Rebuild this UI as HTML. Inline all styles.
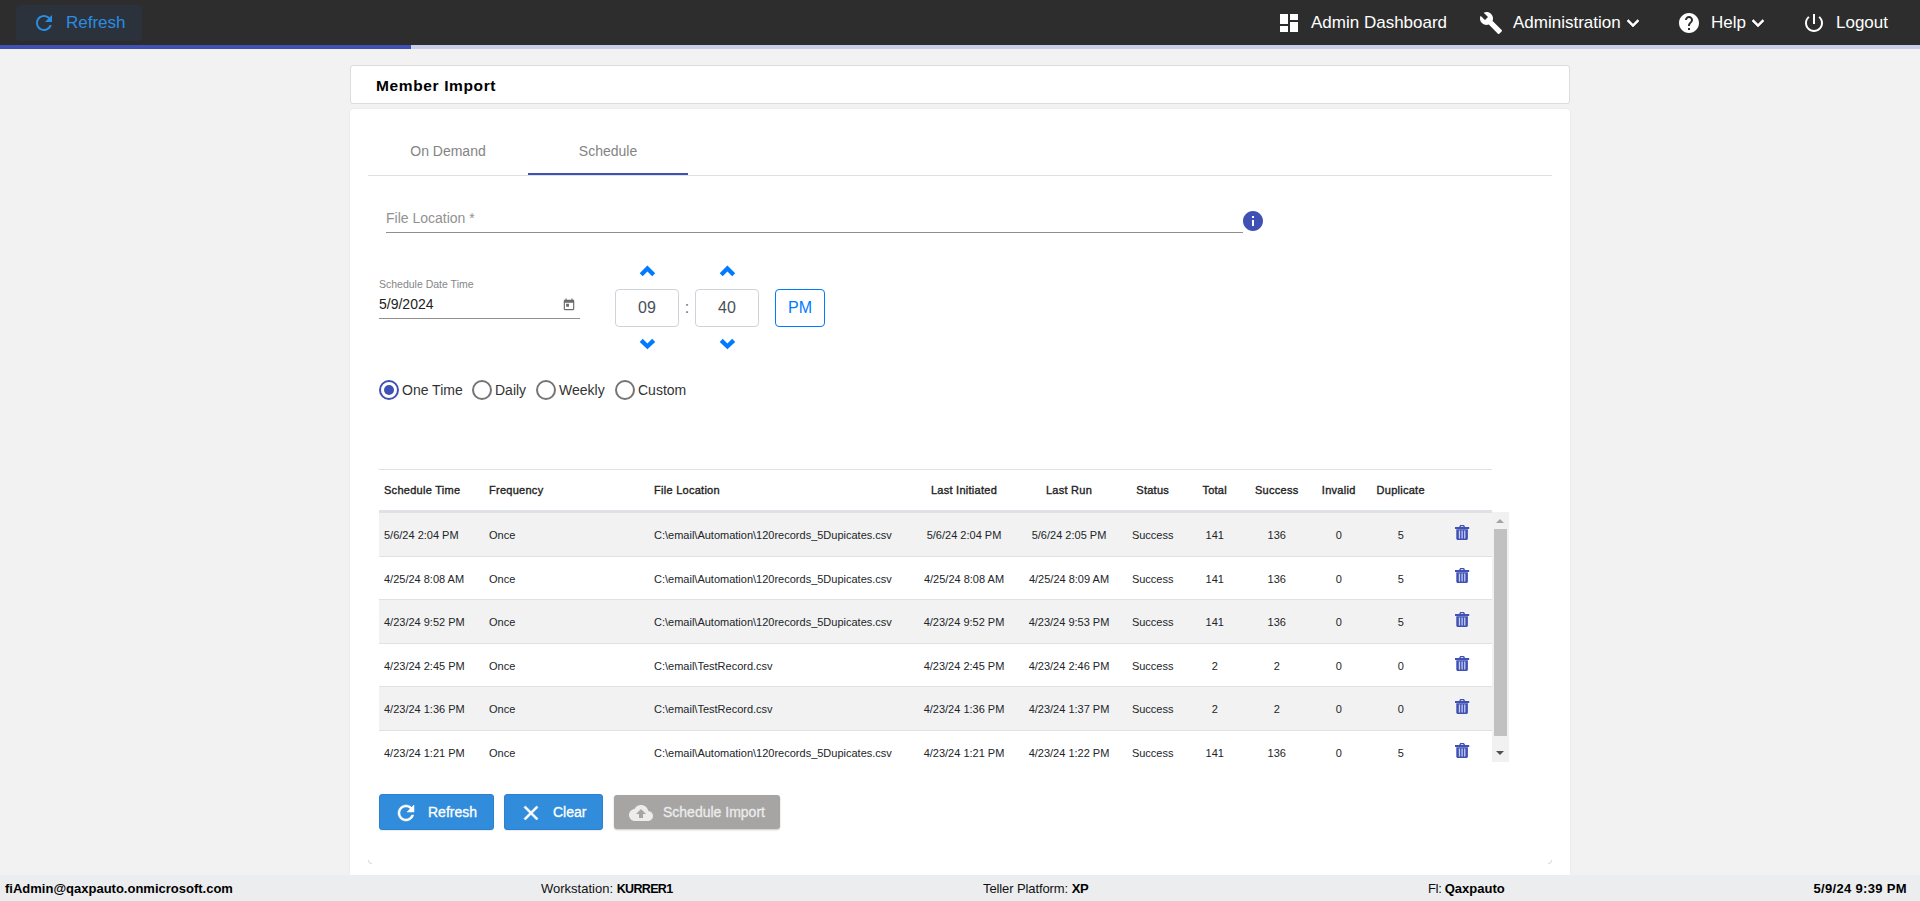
<!DOCTYPE html>
<html lang="en">
<head>
<meta charset="utf-8">
<title>Member Import</title>
<style>
*{box-sizing:border-box;margin:0;padding:0}
html,body{width:1920px;height:901px;overflow:hidden}
body{background:#f2f2f2;font-family:"Liberation Sans",Arial,sans-serif;color:#212529;position:relative}
.abs{position:absolute}
svg{display:block}
/* top bar */
#topbar{position:absolute;left:0;top:0;width:1920px;height:45px;background:#2d2d2d}
#progress{position:absolute;left:0;top:45px;width:1920px;height:4px;background:#c9cdea}
#progress i{position:absolute;left:0;top:0;height:4px;width:410.600px;background:#3f51b5}
#tb-refresh{position:absolute;left:16px;top:5px;width:126px;height:36px;border-radius:4px;background:#2b323c;color:#2b8de0;font-size:17px}
#tb-refresh svg{position:absolute;left:16px;top:6px}
#tb-refresh span{position:absolute;left:50px;top:8px;line-height:20px}
.nav{position:absolute;top:0;height:45px;color:#fff;font-size:17px;line-height:20px;white-space:nowrap}
.nav span{position:absolute;top:13px}
.nav svg{position:absolute}
/* cards */
#card1{position:absolute;left:350px;top:65px;width:1220px;height:39px;background:#fff;border:1px solid #dcdcdc;border-radius:3px}
#card1 h1{position:absolute;left:25px;top:10px;font-size:15.500px;line-height:20px;font-weight:bold;color:#000;white-space:nowrap;letter-spacing:.63px}
#card2{position:absolute;left:350px;top:109px;width:1220px;height:766px;background:#fff;border-radius:4px 4px 0 0;box-shadow:0 0 2px rgba(0,0,0,.08)}
/* tabs */
#tabs{position:absolute;left:368px;top:127px;width:1184px;height:49px;border-bottom:1px solid #e0e0e0}
.tab{position:absolute;top:0;width:160px;height:48px;line-height:48px;text-align:center;font-size:14px;color:#848484}
#ink{position:absolute;left:528px;top:173px;width:160px;height:2px;background:#3f51b5}
/* form */
#fileloc{position:absolute;left:386px;top:209px;font-size:14px;line-height:18px;color:#919191;white-space:nowrap}
#fileline{position:absolute;left:386px;top:232px;width:857px;height:1px;background:#8f8f8f}
#info{position:absolute;left:1241px;top:209px}
#sdt-label{position:absolute;left:379px;top:278px;font-size:10.5px;line-height:12px;color:#868686;white-space:nowrap}
#sdt-val{position:absolute;left:379px;top:296px;font-size:14px;line-height:16px;color:#222;white-space:nowrap}
#sdt-line{position:absolute;left:379px;top:318px;width:201px;height:1px;background:#8f8f8f}
#cal{position:absolute;left:562px;top:298px}
.tbox{position:absolute;top:289px;width:64px;height:38px;border:1px solid #ced4da;border-radius:4px;background:#fff;color:#495057;font-size:16px;line-height:36px;text-align:center}
#colon{position:absolute;left:683px;top:299px;width:8px;text-align:center;font-size:16px;line-height:18px;color:#6c757d}
#pm{position:absolute;left:775px;top:289px;width:50px;height:38px;border:1px solid #007bff;border-radius:4px;color:#007bff;font-size:16px;line-height:36px;text-align:center;background:#fff}
.chev{position:absolute}
/* radios */
.radio{position:absolute;top:380px;width:20px;height:20px;border:2px solid #757575;border-radius:50%}
.radio.on{border-color:#3f51b5}
.radio.on::after{content:"";position:absolute;left:3px;top:3px;width:10px;height:10px;border-radius:50%;background:#3f51b5}
.rlabel{position:absolute;top:381px;font-size:14px;line-height:18px;color:#333;white-space:nowrap}
/* table */
#thead{position:absolute;left:379px;top:469px;width:1113px;height:43px;border-top:1px solid #dee2e6;border-bottom:2px solid #dee2e6;font-size:11px;font-weight:normal;-webkit-text-stroke:.35px #222;color:#222}
#tbody{position:absolute;left:379px;top:512px;width:1130px;height:250px;overflow:hidden}
.row{position:absolute;left:0;width:1113px;height:43.6px;border-top:1px solid #dee2e6;font-size:11px;color:#212529}
.row.odd{background:#f2f2f2}
.c{position:absolute;top:0;white-space:nowrap}
#thead .c{top:13px;line-height:14px;letter-spacing:.27px}
.row .c{top:15px;line-height:14px}
.cc{text-align:center;transform:translateX(-50%)}
.trash{position:absolute;left:1075.850px;top:11.900px}
#scroll{position:absolute;left:1113px;top:0;width:17px;height:250px;background:#f1f1f1}
#scroll .thumb{position:absolute;left:2px;top:17px;width:13px;height:207px;background:#c1c1c1}
#scroll .up{position:absolute;left:4px;top:6.500px;width:0;height:0;border-left:4px solid transparent;border-right:4px solid transparent;border-bottom:4.500px solid #a3a3a3}
#scroll .dn{position:absolute;left:4px;top:238.500px;width:0;height:0;border-left:4px solid transparent;border-right:4px solid transparent;border-top:4.500px solid #505050}
/* buttons */
.btn{position:absolute;top:794px;height:36px;border-radius:3px;background:#318ddb;border:1px solid #2b80cf;color:#fff;font-size:14px;line-height:36px;white-space:nowrap;box-shadow:0 1px 1px rgba(0,0,0,.08);-webkit-text-stroke:.3px #fff}
.btn svg{position:absolute;left:13.500px;top:5.500px}
.btn span{position:absolute;left:48px;top:-1px}
.btn.dis{top:795px;height:34px;line-height:34px;background:#a6a5a4;border:none;color:#ececec;box-shadow:0 1px 2px rgba(0,0,0,.22);-webkit-text-stroke:.3px #ececec}
.btn.dis svg{left:15px;top:5.500px}
.btn.dis span{left:49px;top:0}
/* footer */
#footer{position:absolute;left:0;top:875px;width:1920px;height:26px;background:#ecedef;font-size:13px;line-height:16px;color:#111}
#footer div{position:absolute;top:6px;white-space:nowrap}
#footer b{font-weight:bold;color:#000}
</style>
</head>
<body>
<div id="topbar">
  <div id="tb-refresh">
    <svg width="24" height="24" viewBox="0 0 24 24"><path fill="#2b8de0" d="M17.65 6.35C16.2 4.9 14.21 4 12 4c-4.42 0-7.99 3.58-7.99 8s3.57 8 7.99 8c3.73 0 6.84-2.55 7.73-6h-2.08c-.82 2.33-3.04 4-5.65 4-3.31 0-6-2.69-6-6s2.69-6 6-6c1.66 0 3.14.69 4.22 1.78L13 11h7V4l-2.35 2.35z"/></svg>
    <span>Refresh</span>
  </div>
  <div class="nav" style="left:1277px;width:180px">
    <svg style="left:0;top:11px" width="24" height="24" viewBox="0 0 24 24"><path fill="#fff" d="M3 13h8V3H3v10zm0 8h8v-6H3v6zm10 0h8V11h-8v10zm0-18v6h8V3h-8z"/></svg>
    <span style="left:34px">Admin Dashboard</span>
  </div>
  <div class="nav" style="left:1479px;width:170px">
    <svg style="left:0;top:11px" width="24" height="24" viewBox="0 0 24 24"><path fill="#fff" d="M22.7 19l-9.1-9.1c.9-2.3.4-5-1.500-6.900-2-2-5-2.400-7.400-1.300L9 6 6 9 1.600 4.700C.4 7.100.9 10.100 2.900 12.100c1.900 1.900 4.600 2.400 6.900 1.500l9.100 9.100c.4.400 1 .4 1.400 0l2.300-2.300c.5-.4.500-1.100.1-1.400z"/></svg>
    <span style="left:34px">Administration</span>
    <svg style="left:142px;top:11px" width="24" height="24" viewBox="0 0 24 24"><path fill="#fff" stroke="#fff" stroke-width=".6" d="M16.59 8.590L12 13.170 7.410 8.590 6 10l6 6 6-6z"/></svg>
  </div>
  <div class="nav" style="left:1677px;width:100px">
    <svg style="left:0;top:11px" width="24" height="24" viewBox="0 0 24 24"><path fill="#fff" d="M12 2C6.480 2 2 6.480 2 12s4.480 10 10 10 10-4.480 10-10S17.520 2 12 2zm1 17h-2v-2h2v2zm2.070-7.750l-.9.920C13.450 12.900 13 13.500 13 15h-2v-.5c0-1.100.45-2.100 1.170-2.830l1.240-1.260c.37-.36.590-.86.590-1.410 0-1.100-.9-2-2-2s-2 .9-2 2H8c0-2.210 1.790-4 4-4s4 1.790 4 4c0 .88-.36 1.680-.93 2.250z"/></svg>
    <span style="left:34px">Help</span>
    <svg style="left:69px;top:11px" width="24" height="24" viewBox="0 0 24 24"><path fill="#fff" stroke="#fff" stroke-width=".6" d="M16.59 8.590L12 13.170 7.410 8.590 6 10l6 6 6-6z"/></svg>
  </div>
  <div class="nav" style="left:1802px;width:100px">
    <svg style="left:0;top:11px" width="24" height="24" viewBox="0 0 24 24"><path fill="#fff" d="M13 3h-2v10h2V3zm4.830 2.170l-1.420 1.420C17.990 7.860 19 9.810 19 12c0 3.870-3.130 7-7 7s-7-3.130-7-7c0-2.190 1.010-4.140 2.580-5.420L6.170 5.170C4.230 6.820 3 9.260 3 12c0 4.970 4.030 9 9 9s9-4.030 9-9c0-2.740-1.230-5.180-3.170-6.830z"/></svg>
    <span style="left:34px">Logout</span>
  </div>
</div>
<div id="progress"><i></i></div>

<div id="card1"><h1>Member Import</h1></div>
<div id="card2"></div>

<div id="tabs">
  <div class="tab" style="left:0">On Demand</div>
  <div class="tab" style="left:160px">Schedule</div>
</div>
<div id="ink"></div>

<div id="fileloc">File Location *</div>
<div id="fileline"></div>
<svg id="info" width="24" height="24" viewBox="0 0 24 24"><path fill="#3f51b5" d="M12 2C6.480 2 2 6.480 2 12s4.480 10 10 10 10-4.480 10-10S17.520 2 12 2zm1 15h-2v-6h2v6zm0-8h-2V7h2v2z"/></svg>

<div id="sdt-label">Schedule Date Time</div>
<div id="sdt-val">5/9/2024</div>
<div id="sdt-line"></div>
<svg id="cal" width="14" height="14" viewBox="0 0 24 24"><path fill="#6b6b6b" d="M19 3h-1V1h-2v2H8V1H6v2H5c-1.110 0-1.990.9-1.990 2L3 19c0 1.100.89 2 2 2h14c1.100 0 2-.9 2-2V5c0-1.100-.9-2-2-2zm0 16H5V8h14v11zM7 10h5v5H7z"/></svg>

<svg class="chev" style="left:639px;top:265px" width="17" height="12" viewBox="0 0 17 12"><polygon fill="#007bff" points="8.400,0.500 0.700,8.300 3.700,11.300 8.400,6.600 13.200,11.300 16.200,8.300"/></svg>
<svg class="chev" style="left:719px;top:265px" width="17" height="12" viewBox="0 0 17 12"><polygon fill="#007bff" points="8.400,0.500 0.700,8.300 3.700,11.300 8.400,6.600 13.200,11.300 16.200,8.300"/></svg>
<div class="tbox" style="left:615px">09</div>
<div id="colon">:</div>
<div class="tbox" style="left:695px">40</div>
<div id="pm">PM</div>
<svg class="chev" style="left:639px;top:338px" width="17" height="12" viewBox="0 0 17 12"><polygon fill="#007bff" points="3.700,0.800 0.700,3.900 8.400,11.300 16.200,3.900 13.200,0.800 8.400,5.500"/></svg>
<svg class="chev" style="left:719px;top:338px" width="17" height="12" viewBox="0 0 17 12"><polygon fill="#007bff" points="3.700,0.800 0.700,3.900 8.400,11.300 16.200,3.900 13.200,0.800 8.400,5.500"/></svg>

<div class="radio on" style="left:379px"></div><div class="rlabel" style="left:402px">One Time</div>
<div class="radio" style="left:472px"></div><div class="rlabel" style="left:495px">Daily</div>
<div class="radio" style="left:536px"></div><div class="rlabel" style="left:559px">Weekly</div>
<div class="radio" style="left:615px"></div><div class="rlabel" style="left:638px">Custom</div>

<div id="thead">
  <div class="c" style="left:5px">Schedule Time</div>
  <div class="c" style="left:110px">Frequency</div>
  <div class="c" style="left:275px">File Location</div>
  <div class="c cc" style="left:585px">Last Initiated</div>
  <div class="c cc" style="left:690px">Last Run</div>
  <div class="c cc" style="left:773.7px">Status</div>
  <div class="c cc" style="left:835.7px">Total</div>
  <div class="c cc" style="left:897.7px">Success</div>
  <div class="c cc" style="left:959.7px">Invalid</div>
  <div class="c cc" style="left:1021.7px">Duplicate</div>
</div>
<div id="tbody">
  <div class="row odd" style="top:0.0px">
  <div class="c" style="left:5px">5/6/24 2:04 PM</div><div class="c" style="left:110px">Once</div><div class="c" style="left:275px">C:\email\Automation\120records_5Dupicates.csv</div>
  <div class="c cc" style="left:585px">5/6/24 2:04 PM</div><div class="c cc" style="left:690px">5/6/24 2:05 PM</div><div class="c cc" style="left:773.7px">Success</div><div class="c cc" style="left:835.7px">141</div><div class="c cc" style="left:897.7px">136</div><div class="c cc" style="left:959.7px">0</div><div class="c cc" style="left:1021.7px">5</div>
  <svg class="trash" width="15" height="16" viewBox="0 0 15 16"><path fill="#3f51b5" fill-rule="evenodd" d="M0 1.900h4.100L4.900.400C5 .150 5.250 0 5.500 0h3.200c.25 0 .5.150.6.400l.8 1.500h4.100v2H0zM5.700 1.900h2.800l-.3-.65H6zM1.300 4.300h11.600v9.300c0 .85-.65 1.500-1.500 1.500H2.800c-.85 0-1.500-.65-1.500-1.500z"/><path fill="#c5caea" d="M3.800 5.400h1.300v8.100h-1.300zM6.450 5.400h1.300v8.100H6.450zM9.100 5.400h1.300v8.100h-1.300z"/></svg>
  </div>
  <div class="row" style="top:43.6px">
  <div class="c" style="left:5px">4/25/24 8:08 AM</div><div class="c" style="left:110px">Once</div><div class="c" style="left:275px">C:\email\Automation\120records_5Dupicates.csv</div>
  <div class="c cc" style="left:585px">4/25/24 8:08 AM</div><div class="c cc" style="left:690px">4/25/24 8:09 AM</div><div class="c cc" style="left:773.7px">Success</div><div class="c cc" style="left:835.7px">141</div><div class="c cc" style="left:897.7px">136</div><div class="c cc" style="left:959.7px">0</div><div class="c cc" style="left:1021.7px">5</div>
  <svg class="trash" width="15" height="16" viewBox="0 0 15 16"><path fill="#3f51b5" fill-rule="evenodd" d="M0 1.900h4.100L4.900.400C5 .150 5.250 0 5.500 0h3.200c.25 0 .5.150.6.400l.8 1.500h4.100v2H0zM5.700 1.900h2.800l-.3-.65H6zM1.300 4.300h11.600v9.300c0 .85-.65 1.500-1.500 1.500H2.800c-.85 0-1.500-.65-1.500-1.500z"/><path fill="#c5caea" d="M3.800 5.400h1.300v8.100h-1.300zM6.450 5.400h1.300v8.100H6.450zM9.100 5.400h1.300v8.100h-1.300z"/></svg>
  </div>
  <div class="row odd" style="top:87.2px">
  <div class="c" style="left:5px">4/23/24 9:52 PM</div><div class="c" style="left:110px">Once</div><div class="c" style="left:275px">C:\email\Automation\120records_5Dupicates.csv</div>
  <div class="c cc" style="left:585px">4/23/24 9:52 PM</div><div class="c cc" style="left:690px">4/23/24 9:53 PM</div><div class="c cc" style="left:773.7px">Success</div><div class="c cc" style="left:835.7px">141</div><div class="c cc" style="left:897.7px">136</div><div class="c cc" style="left:959.7px">0</div><div class="c cc" style="left:1021.7px">5</div>
  <svg class="trash" width="15" height="16" viewBox="0 0 15 16"><path fill="#3f51b5" fill-rule="evenodd" d="M0 1.900h4.100L4.900.400C5 .150 5.250 0 5.500 0h3.200c.25 0 .5.150.6.400l.8 1.500h4.100v2H0zM5.700 1.900h2.800l-.3-.65H6zM1.300 4.300h11.600v9.300c0 .85-.65 1.500-1.500 1.500H2.800c-.85 0-1.500-.65-1.500-1.500z"/><path fill="#c5caea" d="M3.800 5.400h1.300v8.100h-1.300zM6.450 5.400h1.300v8.100H6.450zM9.100 5.400h1.300v8.100h-1.300z"/></svg>
  </div>
  <div class="row" style="top:130.8px">
  <div class="c" style="left:5px">4/23/24 2:45 PM</div><div class="c" style="left:110px">Once</div><div class="c" style="left:275px">C:\email\TestRecord.csv</div>
  <div class="c cc" style="left:585px">4/23/24 2:45 PM</div><div class="c cc" style="left:690px">4/23/24 2:46 PM</div><div class="c cc" style="left:773.7px">Success</div><div class="c cc" style="left:835.7px">2</div><div class="c cc" style="left:897.7px">2</div><div class="c cc" style="left:959.7px">0</div><div class="c cc" style="left:1021.7px">0</div>
  <svg class="trash" width="15" height="16" viewBox="0 0 15 16"><path fill="#3f51b5" fill-rule="evenodd" d="M0 1.900h4.100L4.900.400C5 .150 5.250 0 5.500 0h3.200c.25 0 .5.150.6.400l.8 1.500h4.100v2H0zM5.700 1.900h2.800l-.3-.65H6zM1.300 4.300h11.600v9.300c0 .85-.65 1.500-1.500 1.500H2.800c-.85 0-1.500-.65-1.500-1.500z"/><path fill="#c5caea" d="M3.800 5.400h1.300v8.100h-1.300zM6.450 5.400h1.300v8.100H6.450zM9.100 5.400h1.300v8.100h-1.300z"/></svg>
  </div>
  <div class="row odd" style="top:174.4px">
  <div class="c" style="left:5px">4/23/24 1:36 PM</div><div class="c" style="left:110px">Once</div><div class="c" style="left:275px">C:\email\TestRecord.csv</div>
  <div class="c cc" style="left:585px">4/23/24 1:36 PM</div><div class="c cc" style="left:690px">4/23/24 1:37 PM</div><div class="c cc" style="left:773.7px">Success</div><div class="c cc" style="left:835.7px">2</div><div class="c cc" style="left:897.7px">2</div><div class="c cc" style="left:959.7px">0</div><div class="c cc" style="left:1021.7px">0</div>
  <svg class="trash" width="15" height="16" viewBox="0 0 15 16"><path fill="#3f51b5" fill-rule="evenodd" d="M0 1.900h4.100L4.900.400C5 .150 5.250 0 5.500 0h3.200c.25 0 .5.150.6.400l.8 1.500h4.100v2H0zM5.700 1.900h2.800l-.3-.65H6zM1.300 4.300h11.600v9.300c0 .85-.65 1.500-1.500 1.500H2.800c-.85 0-1.500-.65-1.500-1.500z"/><path fill="#c5caea" d="M3.800 5.400h1.300v8.100h-1.300zM6.450 5.400h1.300v8.100H6.450zM9.100 5.400h1.300v8.100h-1.300z"/></svg>
  </div>
  <div class="row" style="top:218.0px">
  <div class="c" style="left:5px">4/23/24 1:21 PM</div><div class="c" style="left:110px">Once</div><div class="c" style="left:275px">C:\email\Automation\120records_5Dupicates.csv</div>
  <div class="c cc" style="left:585px">4/23/24 1:21 PM</div><div class="c cc" style="left:690px">4/23/24 1:22 PM</div><div class="c cc" style="left:773.7px">Success</div><div class="c cc" style="left:835.7px">141</div><div class="c cc" style="left:897.7px">136</div><div class="c cc" style="left:959.7px">0</div><div class="c cc" style="left:1021.7px">5</div>
  <svg class="trash" width="15" height="16" viewBox="0 0 15 16"><path fill="#3f51b5" fill-rule="evenodd" d="M0 1.900h4.100L4.900.400C5 .150 5.250 0 5.500 0h3.200c.25 0 .5.150.6.400l.8 1.500h4.100v2H0zM5.700 1.900h2.800l-.3-.65H6zM1.300 4.300h11.600v9.300c0 .85-.65 1.500-1.500 1.500H2.800c-.85 0-1.500-.65-1.500-1.500z"/><path fill="#c5caea" d="M3.800 5.400h1.300v8.100h-1.300zM6.450 5.400h1.300v8.100H6.450zM9.100 5.400h1.300v8.100h-1.300z"/></svg>
  </div>
  <div id="scroll"><div class="up"></div><div class="thumb"></div><div class="dn"></div></div>
</div>

<div class="btn" style="left:379px;width:115px">
  <svg width="24" height="24" viewBox="0 0 24 24"><path fill="#fff" stroke="#fff" stroke-width=".5" d="M17.65 6.350C16.200 4.900 14.210 4 12 4c-4.420 0-7.990 3.580-7.990 8s3.570 8 7.990 8c3.730 0 6.840-2.550 7.730-6h-2.080c-.82 2.330-3.040 4-5.650 4-3.310 0-6-2.690-6-6s2.690-6 6-6c1.660 0 3.140.69 4.220 1.780L13 11h7V4l-2.350 2.350z"/></svg>
  <span>Refresh</span>
</div>
<div class="btn" style="left:504px;width:99px">
  <svg width="24" height="24" viewBox="0 0 24 24"><path fill="#fff" stroke="#fff" stroke-width=".6" d="M19 6.410L17.590 5 12 10.590 6.410 5 5 6.410 10.590 12 5 17.590 6.410 19 12 13.410 17.590 19 19 17.590 13.410 12z"/></svg>
  <span>Clear</span>
</div>
<div class="btn dis" style="left:614px;width:166px">
  <svg width="24" height="24" viewBox="0 0 24 24"><path fill="#ececec" d="M19.350 10.040C18.670 6.590 15.640 4 12 4 9.110 4 6.600 5.640 5.350 8.040 2.340 8.360 0 10.910 0 14c0 3.310 2.690 6 6 6h13c2.760 0 5-2.240 5-5 0-2.640-2.050-4.780-4.650-4.960zM14 13v4h-4v-4H7l5-5 5 5h-3z"/></svg>
  <span>Schedule Import</span>
</div>

<div class="abs" style="left:368px;top:860px;width:4px;height:4px;border-left:1px solid rgba(0,0,0,.14);border-bottom:1px solid rgba(0,0,0,.14);border-bottom-left-radius:4px"></div>
<div class="abs" style="left:1548px;top:860px;width:4px;height:4px;border-right:1px solid rgba(0,0,0,.14);border-bottom:1px solid rgba(0,0,0,.14);border-bottom-right-radius:4px"></div>
<div id="footer">
  <div style="left:5px"><b>fiAdmin@qaxpauto.onmicrosoft.com</b></div>
  <div style="left:541px">Workstation: <b style="font-size:12.500px;letter-spacing:-.65px">KURRER1</b></div>
  <div style="left:983px"><span style="letter-spacing:-.1px">Teller Platform:</span> <b style="letter-spacing:-.4px">XP</b></div>
  <div style="left:1428px"><span style="letter-spacing:-.7px">FI:</span> <b>Qaxpauto</b></div>
  <div style="right:13px;letter-spacing:.33px"><b>5/9/24 9:39 PM</b></div>
</div>
</body>
</html>
